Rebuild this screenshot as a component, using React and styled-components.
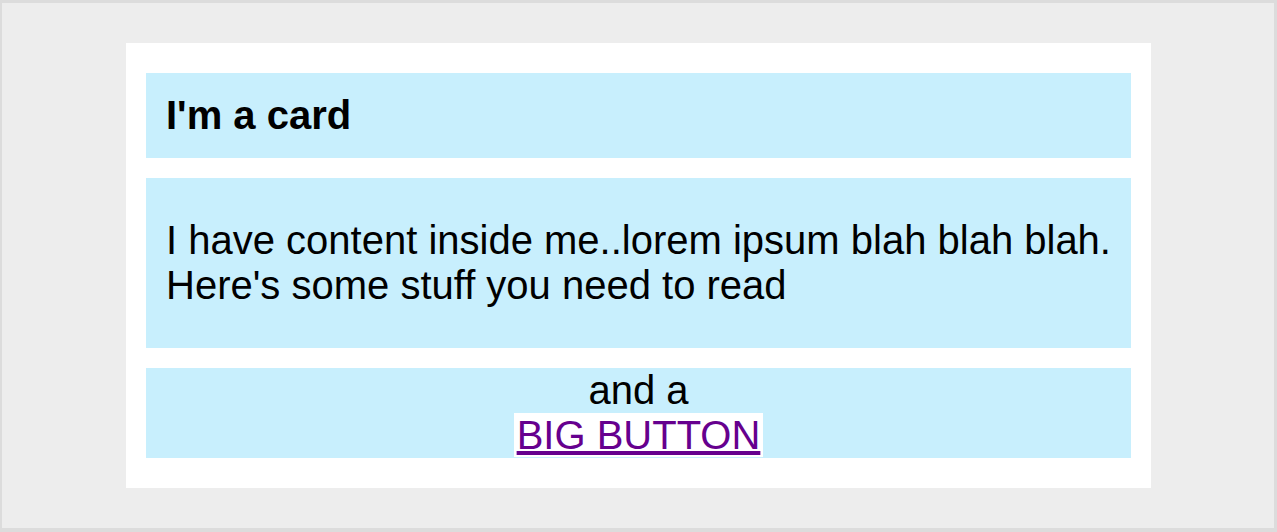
import styled, { createGlobalStyle } from "styled-components";

const GlobalStyle = createGlobalStyle`
  html, body {
    margin: 0;
    padding: 0;
  }
  body {
    font-family: "Liberation Sans", Arial, sans-serif;
    font-size: 40px;
    color: #000;
  }
`;

const Page = styled.div`
  box-sizing: border-box;
  width: 1277px;
  height: 532px;
  background: #ededed;
  border-style: solid;
  border-color: #dcdcdc;
  border-width: 3px 3px 4px 2px;
  padding: 40px 123px 40px 124px;
`;

const Card = styled.div`
  background: #fff;
  padding: 30px 20px;
  display: flex;
  flex-direction: column;
  gap: 20px;
`;

const Section = styled.div`
  background: #c8effd;
  padding: ${(p) => p.$pad || "0"};
  text-align: ${(p) => (p.$center ? "center" : "left")};
  line-height: 45px;
`;

const Title = styled.h1`
  margin: 0;
  font-size: 40px;
  font-weight: 700;
`;

const Text = styled.p`
  margin: 0;
`;

const BigButton = styled.a`
  background: #fff;
  color: #66008e;
  padding: 0 3px;
  text-decoration: underline;
  cursor: pointer;
`;

export default function App() {
  return (
    <>
      <GlobalStyle />
      <Page>
        <Card>
          <Section $pad="20px 20px">
            <Title>I'm a card</Title>
          </Section>
          <Section $pad="40px 20px">
            <Text>
              I have content inside me..lorem ipsum blah blah blah.
              <br />
              Here's some stuff you need to read
            </Text>
          </Section>
          <Section $center>
            and a
            <br />
            <BigButton href="#">BIG BUTTON</BigButton>
          </Section>
        </Card>
      </Page>
    </>
  );
}
